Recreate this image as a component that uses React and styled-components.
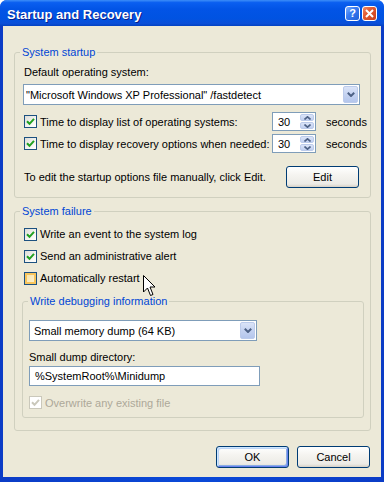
import styled, { createGlobalStyle } from "styled-components";

const GlobalStyle = createGlobalStyle`
  html, body {
    margin: 0;
    padding: 0;
    background: #ffffff;
  }
  * {
    box-sizing: border-box;
  }
`;

const Window = styled.div`
  width: 384px;
  height: 482px;
  display: flex;
  flex-direction: column;
  border-radius: 7px 7px 0 0;
  overflow: hidden;
  background: #0a45d4;
  font-family: "Liberation Sans", Arial, sans-serif;
  font-size: 11px;
  color: #000;
`;

const TitleBar = styled.div`
  height: 26px;
  flex: none;
  display: flex;
  align-items: center;
  justify-content: space-between;
  padding: 0 7px 0 7px;
  background: linear-gradient(
    180deg,
    #3d8ef8 0%,
    #0a5ff0 10%,
    #0254e6 35%,
    #0053e2 70%,
    #0a4fd8 90%,
    #0342c2 100%
  );
`;

const Title = styled.span`
  color: #fff;
  font-weight: bold;
  font-size: 13px;
  line-height: 15px;
  padding-top: 2px;
  text-shadow: 1px 1px 0 #0a1e8a;
`;

const Caps = styled.div`
  display: flex;
  gap: 2px;
`;

const CapButton = styled.div`
  width: 15px;
  height: 15px;
  border: 1px solid #fff;
  border-radius: 3px;
  display: flex;
  align-items: center;
  justify-content: center;
  color: #fff;
  font-weight: bold;
  font-size: 11px;
  background: ${(p) =>
    p.$kind === "close"
      ? "linear-gradient(135deg, #f08a65 0%, #e15a32 40%, #c8401d 100%)"
      : "linear-gradient(135deg, #7fb0ff 0%, #3a7cf2 40%, #1f5fd8 100%)"};
`;

const Frame = styled.div`
  flex: 1;
  display: flex;
  padding: 0 3px 5px 3px;
  background: linear-gradient(90deg, #0b3cc6 0%, #0a49d8 50%, #0b3cc6 100%);
`;

const Body = styled.div`
  position: relative;
  flex: 1;
  display: flex;
  flex-direction: column;
  align-items: flex-start;
  background: #ece9d8;
  padding: 20px 10px 0 11px;
`;

const Group = styled.fieldset`
  margin: ${(p) => p.$margin || "0"};
  border: 1px solid #d0d0bf;
  border-radius: 3px;
  padding: ${(p) => p.$pad};
  min-width: 0;
  width: ${(p) => p.$width}px;
`;

const Legend = styled.legend`
  font-size: 11px;
  line-height: 13px;
  color: #0046d5;
  padding: 0 2px;
  margin-left: ${(p) => p.$shift}px;
`;

const Label = styled.div`
  line-height: 13px;
  padding-left: ${(p) => p.$indent ?? 1}px;
  margin-top: ${(p) => p.$top || 0}px;
`;

const Combo = styled.div`
  width: ${(p) => p.$width}px;
  height: 21px;
  margin-top: ${(p) => p.$top || 0}px;
  border: 1px solid #7f9db9;
  background: #fff;
  display: flex;
  align-items: center;
  justify-content: space-between;
  padding: 0 1px 0 ${(p) => p.$textPad}px;
`;

const DropButton = styled.div`
  width: 15px;
  height: 17px;
  border-radius: 2px;
  border: 1px solid #bccbeb;
  background: linear-gradient(180deg, #dbe4f8 0%, #c5d3f1 50%, #b4c6ec 100%);
  display: flex;
  align-items: center;
  justify-content: center;
`;

const TextField = styled.div`
  width: ${(p) => p.$width}px;
  height: 20px;
  margin-top: ${(p) => p.$top || 0}px;
  border: 1px solid #7f9db9;
  background: #fff;
  display: flex;
  align-items: center;
  padding-left: 5px;
`;

const SpinRow = styled.div`
  display: grid;
  grid-template-columns: 249px 44px auto;
  align-items: center;
  height: 19px;
  width: 337px;
  margin-top: ${(p) => p.$top}px;
`;

const Seconds = styled.span`
  margin-left: 10px;
  white-space: nowrap;
`;

const Spinner = styled.div`
  width: 44px;
  height: 19px;
  border: 1px solid #7f9db9;
  background: #fff;
  display: flex;
  align-items: center;
  justify-content: space-between;
  padding: 0 1px 0 5px;
`;

const SpinButtons = styled.div`
  width: 14px;
  height: 15px;
  display: flex;
  flex-direction: column;
  gap: 1px;
`;

const SpinHalf = styled.div`
  flex: 1;
  border-radius: 2px;
  border: 1px solid #bccbeb;
  background: linear-gradient(180deg, #dbe4f8 0%, #c0cff0 100%);
  display: flex;
  align-items: center;
  justify-content: center;
`;

const CheckRow = styled.div`
  display: flex;
  align-items: center;
  gap: 3px;
  height: ${(p) => p.$height || 13}px;
  margin-left: ${(p) => p.$left || 0}px;
  margin-top: ${(p) => p.$top || 0}px;
  color: ${(p) => (p.$disabled ? "#aca899" : "#000")};
  white-space: nowrap;
`;

const Box = styled.span`
  width: 13px;
  height: 13px;
  flex: none;
  display: flex;
  align-items: center;
  justify-content: center;
  border: 1px solid ${(p) => (p.$disabled ? "#cac8bb" : "#1c5180")};
  background: ${(p) =>
    p.$disabled
      ? "#fff"
      : p.$hover
      ? "linear-gradient(135deg, #f7e2a6 0%, #fdf4d6 100%)"
      : "linear-gradient(135deg, #dcdcd7 0%, #f5f5f2 60%, #ffffff 100%)"};
  box-shadow: ${(p) => (p.$hover ? "inset 0 0 0 2px #f8c55c" : "none")};
`;

const EditRow = styled.div`
  display: flex;
  align-items: center;
  justify-content: space-between;
  width: 337px;
  margin-top: 13px;
  padding-left: 1px;
  padding-right: 1px;
`;

const Button = styled.div`
  width: 73px;
  height: 22px;
  display: flex;
  align-items: center;
  justify-content: center;
  border: 1px solid #003c74;
  border-radius: 3px;
  background: linear-gradient(
    180deg,
    #ffffff 0%,
    #f5f4f0 40%,
    #ecebe6 85%,
    #d6d0c5 100%
  );
  box-shadow: ${(p) =>
    p.$default
      ? "inset 1px 1px 0 #cee7ff, inset -1px -1px 0 #6982ee, inset 2px 2px 0 #bcd4f6, inset -2px -2px 0 #89ade4"
      : "none"};
`;

const Actions = styled.div`
  display: flex;
  justify-content: flex-end;
  align-self: stretch;
  gap: 8px;
  margin-top: 15px;
  margin-right: 1px;
`;

const Cursor = styled.svg`
  position: absolute;
  left: 140px;
  top: 249px;
`;

const Chevron = ({ up }) => (
  <svg width="7" height="4" viewBox="0 0 7 4">
    <path
      d={up ? "M0.5 3.5 L3.5 0.8 L6.5 3.5" : "M0.5 0.5 L3.5 3.2 L6.5 0.5"}
      fill="none"
      stroke="#4d6185"
      strokeWidth="1.6"
    />
  </svg>
);

const Check = ({ checked, disabled, hover }) => (
  <Box $disabled={disabled} $hover={hover}>
    {checked && (
      <svg width="9" height="9" viewBox="0 0 9 9">
        <path
          d="M1 4.2 L3.5 6.8 L8 1.8"
          fill="none"
          stroke={disabled ? "#cac8bb" : "#21a121"}
          strokeWidth="2"
        />
      </svg>
    )}
  </Box>
);

const Spin = ({ value }) => (
  <Spinner>
    <span>{value}</span>
    <SpinButtons>
      <SpinHalf>
        <Chevron up />
      </SpinHalf>
      <SpinHalf>
        <Chevron />
      </SpinHalf>
    </SpinButtons>
  </Spinner>
);

const Drop = () => (
  <DropButton>
    <svg width="8" height="5" viewBox="0 0 8 5">
      <path d="M0.8 0.8 L4 4 L7.2 0.8" fill="none" stroke="#4d6185" strokeWidth="2" />
    </svg>
  </DropButton>
);

export default function App() {
  return (
    <>
      <GlobalStyle />
      <Window>
        <TitleBar>
          <Title>Startup and Recovery</Title>
          <Caps>
            <CapButton $kind="help">?</CapButton>
            <CapButton $kind="close">
              <svg width="9" height="9" viewBox="0 0 9 9">
                <path d="M1 1 L8 8 M8 1 L1 8" stroke="#fff" strokeWidth="2" />
              </svg>
            </CapButton>
          </Caps>
        </TitleBar>
        <Frame>
          <Body>
            <Group $pad="7px 10px 9px 8px" $width={357}>
              <Legend $shift={-3}>System startup</Legend>
              <Label>Default operating system:</Label>
              <Combo $width={337} $top={5} $textPad={2}>
                <span>"Microsoft Windows XP Professional" /fastdetect</span>
                <Drop />
              </Combo>
              <SpinRow $top={7}>
                <CheckRow $left={1}>
                  <Check checked />
                  Time to display list of operating systems:
                </CheckRow>
                <Spin value="30" />
                <Seconds>seconds</Seconds>
              </SpinRow>
              <SpinRow $top={3}>
                <CheckRow $left={1}>
                  <Check checked />
                  Time to display recovery options when needed:
                </CheckRow>
                <Spin value="30" />
                <Seconds>seconds</Seconds>
              </SpinRow>
              <EditRow>
                <span>To edit the startup options file manually, click Edit.</span>
                <Button>Edit</Button>
              </EditRow>
            </Group>

            <Group $pad="5px 6px 12px 7px" $margin="7px 0 0 0" $width={357}>
              <Legend $shift={-2}>System failure</Legend>
              <CheckRow $left={2} $height={22}>
                <Check checked />
                Write an event to the system log
              </CheckRow>
              <CheckRow $left={2} $height={22}>
                <Check checked />
                Send an administrative alert
              </CheckRow>
              <CheckRow $left={2} $height={22}>
                <Check hover />
                Automatically restart
              </CheckRow>
              <Group $pad="12px 6px 8px 6px" $margin="6px 0 0 0" $width={342}>
                <Legend $shift={-1}>Write debugging information</Legend>
                <Combo $width={228} $textPad={4}>
                  <span>Small memory dump (64 KB)</span>
                  <Drop />
                </Combo>
                <Label $top={10} $indent={0}>
                  Small dump directory:
                </Label>
                <TextField $width={231} $top={2}>
                  %SystemRoot%\Minidump
                </TextField>
                <CheckRow $top={10} $disabled>
                  <Check checked disabled />
                  Overwrite any existing file
                </CheckRow>
              </Group>
            </Group>

            <Actions>
              <Button $default>OK</Button>
              <Button>Cancel</Button>
            </Actions>

            <Cursor width="13" height="22" viewBox="0 0 13 22">
              <path
                d="M0.5 0.5 L0.5 17 L4.5 13 L7.5 20.5 L10 19.5 L7 12 L12 12 Z"
                fill="#fff"
                stroke="#000"
                strokeWidth="1"
              />
            </Cursor>
          </Body>
        </Frame>
      </Window>
    </>
  );
}
